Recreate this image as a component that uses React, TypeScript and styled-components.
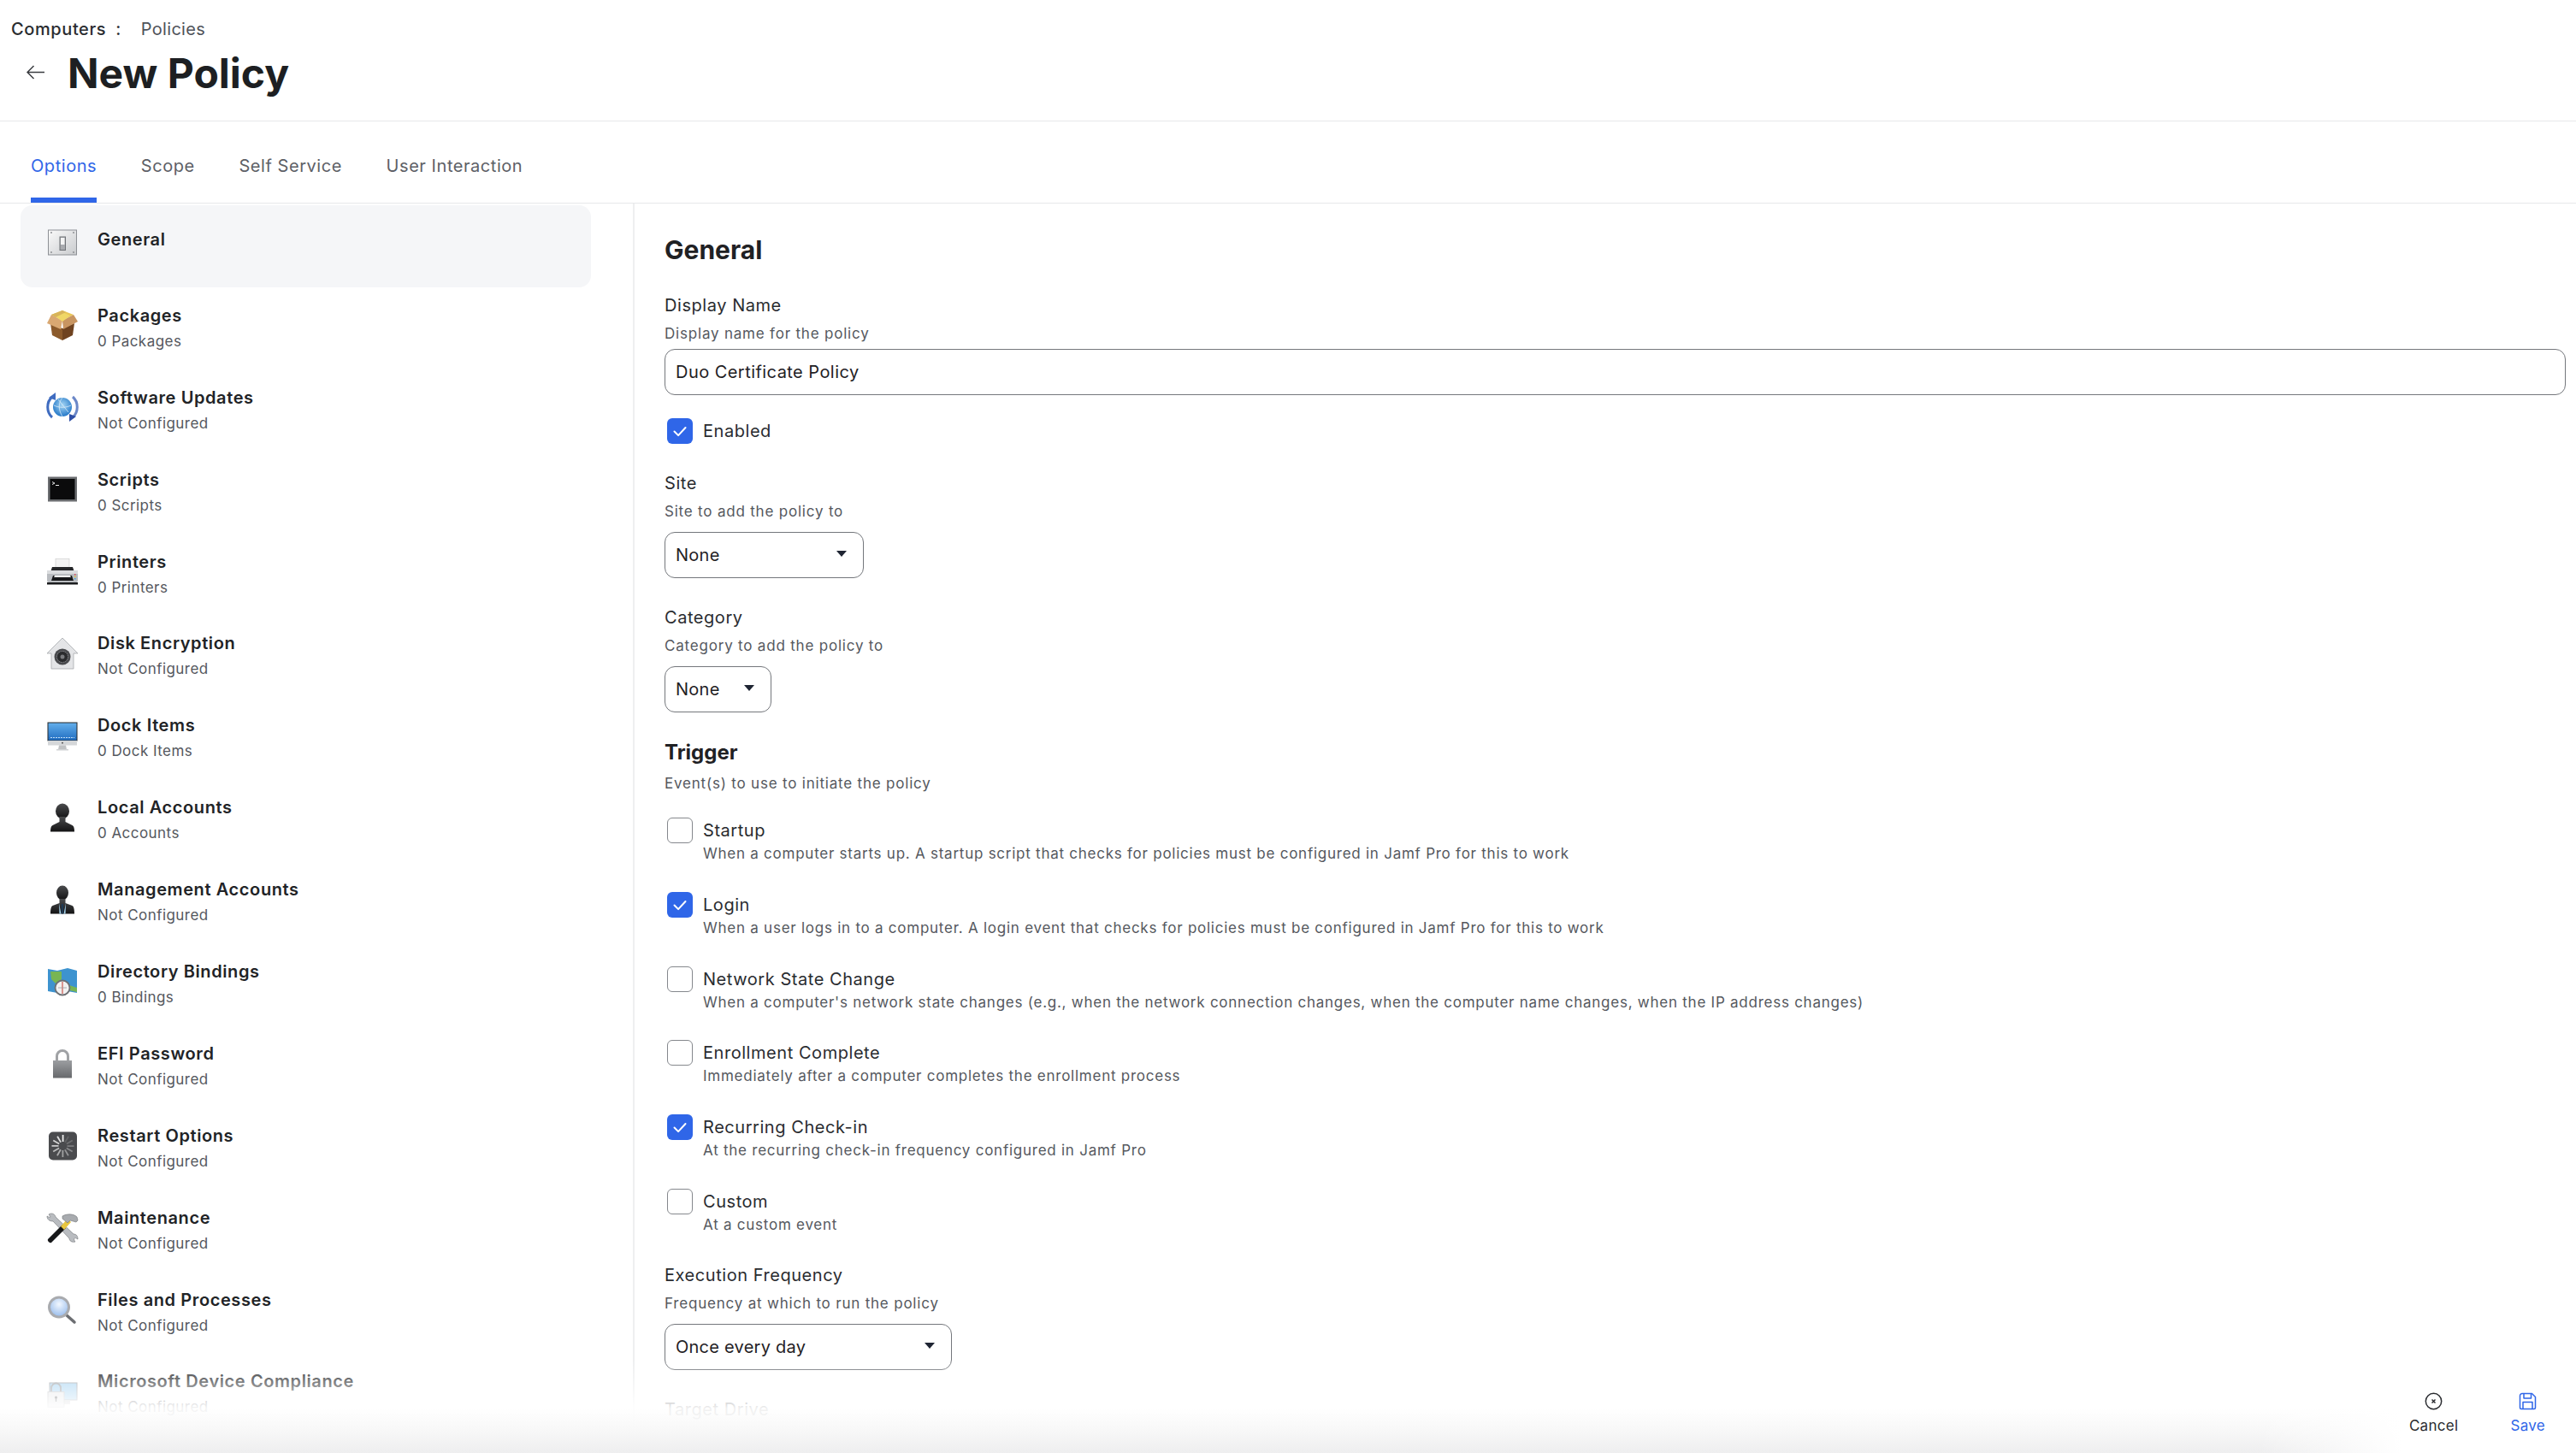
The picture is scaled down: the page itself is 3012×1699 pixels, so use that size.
import React from 'react';
import styled, { createGlobalStyle } from 'styled-components';

const GlobalStyle = createGlobalStyle`
	html, body {
		margin: 0;
		padding: 0;
		height: 1699px;
		overflow: hidden;
		background: #fff;
		font-family: Inter, "Noto Sans", "Liberation Sans", sans-serif;
		color: #1f2124;
	}
	* { box-sizing: border-box; }
`;

const Page = styled.div`
	position: relative;
	display: flex;
	flex-direction: column;
	height: 1699px;
	overflow: hidden;
`;

const Header = styled.header`
	height: 142px;
	flex: none;
	padding: 22px 0 0 13px;
	border-bottom: 1px solid #e7e8ea;
`;

const Breadcrumb = styled.div`
	display: flex;
	gap: 23px;
	font-size: 20px;
	line-height: 24px;
	letter-spacing: 0.3px;
	color: #50535a;
	b {
		display: flex;
		gap: 11px;
		font-weight: 500;
		letter-spacing: 0.6px;
		color: #2a2c30;
	}
`;

const TitleRow = styled.div`
	display: flex;
	align-items: center;
	gap: 27px;
	margin-top: 12px;
	padding-left: 18px;
`;

const BackIcon = styled.svg`
	width: 21px;
	height: 17px;
	flex: none;
	margin-bottom: 3px;
`;

const Title = styled.h1`
	margin: 0;
	font-size: 48px;
	line-height: 56px;
	font-weight: 700;
	color: #1d1f22;
`;

const TabBar = styled.nav`
	display: flex;
	gap: 51.7px;
	flex: none;
	height: 96px;
	padding-left: 36px;
	border-bottom: 1px solid #e7e8ea;
`;

const Tab = styled.div<{ $active?: boolean }>`
	height: 95px;
	padding-top: 40px;
	font-size: 20px;
	line-height: 24px;
	letter-spacing: 0.55px;
	color: ${(p) => (p.$active ? '#2f66e8' : '#5d6066')};
	border-bottom: 6px solid ${(p) => (p.$active ? '#2f66e8' : 'transparent')};
`;

const Body = styled.div`
	display: grid;
	grid-template-columns: 740px 1fr;
	flex: 1;
	min-height: 0;
`;

const Sidebar = styled.aside`
	padding: 2px 49px 0 24px;
	overflow: hidden;
`;

const SideRow = styled.div<{ $active?: boolean }>`
	display: flex;
	align-items: center;
	gap: 22px;
	height: 95.9px;
	padding-left: 30px;
	border-radius: 14px;
	background: ${(p) => (p.$active ? '#f5f6f8' : 'transparent')};
`;

const SideIcon = styled.svg`
	width: 38px;
	height: 38px;
	flex: none;
	margin-bottom: 7px;
	overflow: visible;
`;

const SideTitle = styled.div`
	font-size: 20px;
	line-height: 24px;
	font-weight: 600;
	letter-spacing: 0.6px;
	color: #212326;
	margin-bottom: 6px;
`;

const SideSub = styled.div`
	min-height: 10px;
	font-size: 17px;
	line-height: 24px;
	letter-spacing: 0.45px;
	color: #55585e;
`;

const Panel = styled.main`
	padding: 36px 0 0 35px;
	border-left: 2px solid #eeeff0;
	overflow: hidden;
`;

const PanelTitle = styled.h2`
	margin: 0 0 35px;
	font-size: 30px;
	line-height: 36px;
	font-weight: 700;
	color: #1f2124;
`;

const Field = styled.section<{ $top?: number }>`
	margin-top: ${(p) => p.$top ?? 34}px;
`;

const Label = styled.div`
	font-size: 20px;
	line-height: 24px;
	letter-spacing: 0.55px;
	color: #2a2c30;
`;

const Hint = styled.div`
	margin-top: 11px;
	font-size: 17px;
	line-height: 20px;
	letter-spacing: 0.8px;
	white-space: nowrap;
	color: #55585e;
`;

const TextInput = styled.div`
	display: flex;
	align-items: center;
	width: 2223px;
	height: 54px;
	margin-top: 8px;
	padding-left: 12px;
	border: 1.5px solid #74777c;
	border-radius: 12px;
	font-size: 20px;
	letter-spacing: 0.45px;
	color: #1f2124;
`;

const SelectBox = styled.div<{ $width: number }>`
	display: flex;
	align-items: center;
	justify-content: space-between;
	width: ${(p) => p.$width}px;
	height: 54px;
	margin-top: 14px;
	padding: 0 19px 0 12px;
	border: 1.5px solid #74777c;
	border-radius: 12px;
	font-size: 20px;
	letter-spacing: 0.25px;
	color: #1f2124;
	&::after {
		content: '';
		border-left: 6px solid transparent;
		border-right: 6px solid transparent;
		border-top: 7px solid #1f2533;
		margin-bottom: 3px;
	}
`;

const CheckRow = styled.div`
	display: flex;
	align-items: center;
	gap: 12px;
	margin: 27px 0 0 3px;
	font-size: 20px;
	letter-spacing: 0.55px;
	color: #2a2c30;
`;

const CheckBox = styled.span<{ $checked?: boolean }>`
	display: flex;
	align-items: center;
	justify-content: center;
	width: 30px;
	height: 30px;
	flex: none;
	border-radius: 6px;
	border: ${(p) => (p.$checked ? 'none' : '1.5px solid #85888d')};
	background: ${(p) => (p.$checked ? '#2f66e8' : '#fff')};
`;

const SectionTitle = styled.div`
	font-size: 24px;
	line-height: 30px;
	font-weight: 700;
	color: #1f2124;
`;

const Options = styled.div`
	margin-top: 30px;
`;

const OptionRow = styled.div`
	display: flex;
	gap: 12px;
	height: 86.8px;
	padding-left: 3px;
`;

const OptionLabel = styled.div`
	padding-top: 3px;
	font-size: 20px;
	line-height: 24px;
	letter-spacing: 0.55px;
	color: #2a2c30;
`;

const OptionHint = styled.div`
	margin-top: 5px;
	font-size: 17px;
	line-height: 20px;
	letter-spacing: 0.75px;
	color: #55585e;
`;

const BottomFade = styled.div`
	position: absolute;
	left: 0;
	right: 0;
	bottom: 0;
	height: 109px;
	background: linear-gradient(
		to bottom,
		rgba(255, 255, 255, 0) 0%,
		rgba(255, 255, 255, 0.93) 52%,
		#f8f8f8 75%,
		#eeeeef 100%
	);
`;

const Actions = styled.div`
	position: absolute;
	right: 0;
	bottom: 0;
	display: flex;
	justify-content: flex-end;
	gap: 61px;
	width: 372px;
	height: 109px;
	padding: 38px 36px 0 0;
	background: linear-gradient(to right, rgba(255, 255, 255, 0) 0%, #fff 45%);
`;

const ActionButton = styled.div<{ $primary?: boolean }>`
	display: flex;
	flex-direction: column;
	align-items: center;
	gap: 8px;
	font-size: 17px;
	line-height: 20px;
	letter-spacing: 0.3px;
	color: ${(p) => (p.$primary ? '#2f66e8' : '#2a2c30')};
	svg {
		width: 21px;
		height: 21px;
	}
`;

const Check = () => (
	<svg width="20" height="20" viewBox="0 0 20 20" fill="none">
		<path d="M3.5 10.5l4.6 4.6L16.5 6" stroke="#fff" strokeWidth="2" strokeLinecap="round" strokeLinejoin="round" />
	</svg>
);

// macOS preference style icons, all on a 38 unit grid
const icons: Record<string, React.ReactNode> = {
	general: (
		<>
			<defs>
				<linearGradient id="swBg" x1="0" y1="0" x2="1" y2="1">
					<stop offset="0" stopColor="#fafafa" />
					<stop offset="1" stopColor="#c9cbce" />
				</linearGradient>
			</defs>
			<rect x="2.5" y="4" width="33" height="29" fill="url(#swBg)" stroke="#8d9095" />
			<rect x="16" y="12" width="6.5" height="15.5" fill="#a9abaf" stroke="#6f7277" />
			<rect x="17" y="13" width="4.5" height="8" fill="#f4f4f4" />
			{[[6, 7], [32, 7], [6, 30], [32, 30]].map(([x, y]) => (
				<circle key={`${x}-${y}`} cx={x} cy={y} r="0.9" fill="#85888c" />
			))}
		</>
	),
	packages: (
		<>
			<path d="M5 17l14 6v14L7 31z" fill="#8b5a2b" />
			<path d="M33 17l-14 6v14l12-6z" fill="#6f4320" />
			<path d="M6 7l13-5 13 5-13 7z" fill="#e9c757" />
			<path d="M6 7L1 17l16 7 2-10z" fill="#d9a872" />
			<path d="M32 7l5 8-17 9-1-10z" fill="#c89561" />
			<path d="M10 8l9-4 9 4-9 7z" fill="#f0d766" />
			<path d="M6 7L19 2l4 2-12 6z" fill="#d8b45a" />
		</>
	),
	updates: (
		<>
			<defs>
				<radialGradient id="globe" cx="0.5" cy="0.4" r="0.6">
					<stop offset="0" stopColor="#a5d6f4" />
					<stop offset="1" stopColor="#2478c8" />
				</radialGradient>
			</defs>
			<circle cx="19" cy="19" r="11" fill="url(#globe)" />
			<path d="M9 17c6 3 14 3 20 0M19 8c-5 6-5 14 0 22M14 10l12 15" stroke="#e6f3fb" strokeWidth="0.7" fill="none" />
			<path d="M7 7C0 13 0 25 7 31" stroke="#3f6cc0" strokeWidth="3" fill="none" />
			<path d="M3 8l8-6 0 9z" fill="#3f6cc0" />
			<path d="M31 31c7-6 7-18 0-24" stroke="#3a5fb4" strokeWidth="3" fill="none" opacity="0.75" />
			<path d="M35 30l-8 6 0-9z" fill="#2f4fa6" />
		</>
	),
	scripts: (
		<>
			<rect x="2" y="4.5" width="34" height="29" fill="#6b6d70" />
			<rect x="4.5" y="7" width="29" height="24" fill="#0b0b0c" />
			<path d="M7 10.500l3 1.500-3 1.500" stroke="#e8e8e8" strokeWidth="1" fill="none" />
			<path d="M11 14.500h4" stroke="#e8e8e8" strokeWidth="1" />
		</>
	),
	printers: (
		<>
			<rect x="11" y="4.500" width="16" height="12" fill="#f3f3f3" stroke="#c8c8c8" strokeWidth="0.6" />
			<path d="M7 14h24l2 6H5z" fill="#26272a" />
			<rect x="1" y="18" width="36" height="14" rx="2" fill="#b9bcc0" />
			<rect x="1" y="18" width="36" height="4" fill="#dadcde" />
			<path d="M8 24h22l2 6H6z" fill="#17181a" />
			<path d="M10 24h18l1 2H9z" fill="#f0f0f0" />
			<rect x="1" y="32" width="36" height="2.500" fill="#1b1c1e" />
			<rect x="33" y="22" width="1.500" height="1.500" fill="#e04a5a" />
			<rect x="33" y="24.500" width="1.500" height="1.500" fill="#e5c53a" />
			<rect x="33" y="27" width="1.500" height="1.500" fill="#46a2d8" />
		</>
	),
	disk: (
		<>
			<path d="M19 1L1 19h5v18h26V19h5z" fill="#e4e5e7" stroke="#a7a9ad" strokeWidth="0.8" />
			<circle cx="19" cy="23" r="9.500" fill="#4a4b4e" />
			<circle cx="19" cy="23" r="6.500" fill="#2a2b2d" stroke="#8c8d90" strokeDasharray="1.500 1" />
			<circle cx="19" cy="23" r="2.500" fill="#7a7b7e" />
		</>
	),
	dock: (
		<>
			<defs>
				<linearGradient id="screen" x1="0" y1="0" x2="0" y2="1">
					<stop offset="0" stopColor="#64b0ec" />
					<stop offset="1" stopColor="#1f6cc0" />
				</linearGradient>
			</defs>
			<rect x="2" y="4" width="34" height="21" fill="url(#screen)" stroke="#26282b" />
			<rect x="2" y="25" width="34" height="5.500" fill="#d5d7d9" />
			<circle cx="19" cy="27.700" r="0.9" fill="#444" />
			<path d="M5 21.500h28" stroke="#cfe6f8" strokeWidth="0.9" strokeDasharray="2 1" />
			<path d="M15 30.500h8l1 5h-10z" fill="#c0c2c4" />
			<rect x="12" y="35" width="14" height="1.500" fill="#d0d2d4" />
		</>
	),
	local: (
		<>
			<defs>
				<linearGradient id="person" x1="0" y1="0" x2="0" y2="1">
					<stop offset="0" stopColor="#4a4b4d" />
					<stop offset="1" stopColor="#131314" />
				</linearGradient>
			</defs>
			<ellipse cx="19" cy="11.500" rx="8" ry="9" fill="url(#person)" />
			<path d="M15.500 18h7v6l8 4c2 1 2.500 4 2.500 7.500H5c0-3.500.5-6.500 2.500-7.500l8-4z" fill="url(#person)" />
		</>
	),
	management: (
		<>
			<defs>
				<linearGradient id="admin" x1="0" y1="0" x2="0" y2="1">
					<stop offset="0" stopColor="#4a4b4d" />
					<stop offset="1" stopColor="#131314" />
				</linearGradient>
			</defs>
			<ellipse cx="19" cy="11" rx="7" ry="8.500" fill="url(#admin)" />
			<path d="M15.500 18h7v5l8 3c2 1 2.500 5 2.500 9.500H5c0-4.500.5-8.500 2.500-9.500l8-3z" fill="url(#admin)" />
			<path d="M15 23l2.500 12.500h-2zM23 23l-2.500 12.500h2z" fill="#a6d5ee" />
			<rect x="17.800" y="24" width="2.400" height="11.500" fill="#1f3a55" />
		</>
	),
	directory: (
		<>
			<path d="M2 5l11 2 12-3 11 3v26l-11-2-12 2-11-2z" fill="#3d93cf" />
			<path d="M5 8l13 0 0 9-7 5-5-5z" fill="#78b553" />
			<path d="M27 24l9 3v5l-9-2z" fill="#78b553" />
			<circle cx="19" cy="27" r="8.500" fill="#f1f1f1" stroke="#6d6f73" strokeWidth="1.800" />
			<path d="M19 20v14" stroke="#c9473d" strokeWidth="1.100" />
			<path d="M14 27h10" stroke="#9a9da1" strokeWidth="0.800" />
		</>
	),
	efi: (
		<>
			<defs>
				<linearGradient id="lockBody" x1="0" y1="0" x2="0" y2="1">
					<stop offset="0" stopColor="#9c9ea1" />
					<stop offset="1" stopColor="#67696c" />
				</linearGradient>
			</defs>
			<path d="M12.500 18v-8a6.500 6.500 0 0 1 13 0v8" stroke="#a0a2a5" strokeWidth="3" fill="none" transform="translate(0 1)" />
			<rect x="8" y="16" width="22" height="20.500" fill="url(#lockBody)" />
		</>
	),
	restart: (
		<>
			<rect x="3" y="3.500" width="33" height="33" rx="5" fill="#4a4b4e" />
			{Array.from({ length: 12 }).map((_, i) => (
				<rect
					key={i}
					x="18.700"
					y="7"
					width="1.800"
					height="8"
					fill="#fff"
					opacity={i === 0 ? 0.9 : Math.max(0.12, 0.9 - ((12 - i) % 12) * 0.07)}
					transform={`rotate(${i * 30} 19.500 20)`}
				/>
			))}
		</>
	),
	maintenance: (
		<>
			<path d="M3 4c3-2 7-1 8 3l21 20c3 0 5 2 5 6-2-1-3-2-4-1s0 3 1 4c-4 1-7-1-7-4L8 12c-4 0-7-2-7-6 2 1 3 2 4 1z" fill="#b9bcc0" stroke="#6f7276" strokeWidth="0.6" />
			<path d="M2 33L19 16l4 4L6 37c-2 1-5-2-4-4z" fill="#17181a" />
			<path d="M17 18L25 9l4 4-8 9z" fill="#e8c63e" />
			<path d="M19 6c5-3 13-3 17 1l1 4-2 2-7-2-3 3-6-5z" fill="#a8abaf" stroke="#6f7276" strokeWidth="0.6" />
		</>
	),
	files: (
		<>
			<defs>
				<radialGradient id="lens" cx="0.5" cy="0.35" r="0.7">
					<stop offset="0" stopColor="#f2f8ff" />
					<stop offset="1" stopColor="#8fb6ea" />
				</radialGradient>
			</defs>
			<path d="M24 26l9 8" stroke="#6c6e72" strokeWidth="3.500" strokeLinecap="round" />
			<circle cx="15" cy="16.500" r="11.500" fill="url(#lens)" stroke="#a9abaf" strokeWidth="3" />
		</>
	),
	compliance: (
		<>
			<rect x="4" y="9" width="32" height="20" fill="#a8d4f2" stroke="#9a9da1" />
			<rect x="18" y="29" width="10" height="5" fill="#cfd1d4" />
			<path d="M6 20v-5a5.500 5.500 0 0 1 11 0v5" stroke="#9a9da1" strokeWidth="2" fill="none" />
			<rect x="2" y="19.500" width="19" height="18" fill="#e6e7e9" stroke="#bdbfc2" />
			<circle cx="11.500" cy="26" r="1.600" fill="#55585c" />
			<rect x="10.800" y="26" width="1.400" height="5" fill="#55585c" />
		</>
	),
};

const sideItems = [
	{ icon: 'general', title: 'General', sub: '' },
	{ icon: 'packages', title: 'Packages', sub: '0 Packages' },
	{ icon: 'updates', title: 'Software Updates', sub: 'Not Configured' },
	{ icon: 'scripts', title: 'Scripts', sub: '0 Scripts' },
	{ icon: 'printers', title: 'Printers', sub: '0 Printers' },
	{ icon: 'disk', title: 'Disk Encryption', sub: 'Not Configured' },
	{ icon: 'dock', title: 'Dock Items', sub: '0 Dock Items' },
	{ icon: 'local', title: 'Local Accounts', sub: '0 Accounts' },
	{ icon: 'management', title: 'Management Accounts', sub: 'Not Configured' },
	{ icon: 'directory', title: 'Directory Bindings', sub: '0 Bindings' },
	{ icon: 'efi', title: 'EFI Password', sub: 'Not Configured' },
	{ icon: 'restart', title: 'Restart Options', sub: 'Not Configured' },
	{ icon: 'maintenance', title: 'Maintenance', sub: 'Not Configured' },
	{ icon: 'files', title: 'Files and Processes', sub: 'Not Configured' },
	{ icon: 'compliance', title: 'Microsoft Device Compliance', sub: 'Not Configured' },
];

const triggers = [
	{
		label: 'Startup',
		hint: 'When a computer starts up. A startup script that checks for policies must be configured in Jamf Pro for this to work',
	},
	{
		label: 'Login',
		hint: 'When a user logs in to a computer. A login event that checks for policies must be configured in Jamf Pro for this to work',
		checked: true,
	},
	{
		label: 'Network State Change',
		hint: "When a computer's network state changes (e.g., when the network connection changes, when the computer name changes, when the IP address changes)",
	},
	{ label: 'Enrollment Complete', hint: 'Immediately after a computer completes the enrollment process' },
	{ label: 'Recurring Check-in', hint: 'At the recurring check-in frequency configured in Jamf Pro', checked: true },
	{ label: 'Custom', hint: 'At a custom event' },
];

const App = () => {
	return (
		<Page>
			<GlobalStyle />
			<Header>
				<Breadcrumb>
					<b>
						Computers<span>:</span>
					</b>
					<span>Policies</span>
				</Breadcrumb>
				<TitleRow>
					<BackIcon viewBox="0 0 21 17" fill="none">
						<path d="M8.500 1L1 8.500 8.500 16M1 8.500h20" stroke="#3a3c40" strokeWidth="1.500" />
					</BackIcon>
					<Title>New Policy</Title>
				</TitleRow>
			</Header>
			<TabBar>
				<Tab $active>Options</Tab>
				<Tab>Scope</Tab>
				<Tab>Self Service</Tab>
				<Tab>User Interaction</Tab>
			</TabBar>
			<Body>
				<Sidebar>
					{sideItems.map((item, i) => (
						<SideRow key={item.title} $active={i === 0}>
							<SideIcon viewBox="0 0 38 38">{icons[item.icon]}</SideIcon>
							<div>
								<SideTitle>{item.title}</SideTitle>
								<SideSub>{item.sub}</SideSub>
							</div>
						</SideRow>
					))}
				</Sidebar>
				<Panel>
					<PanelTitle>General</PanelTitle>
					<Label>Display Name</Label>
					<Hint>Display name for the policy</Hint>
					<TextInput>Duo Certificate Policy</TextInput>
					<CheckRow>
						<CheckBox $checked>
							<Check />
						</CheckBox>
						Enabled
					</CheckRow>
					<Field $top={34}>
						<Label>Site</Label>
						<Hint>Site to add the policy to</Hint>
						<SelectBox $width={233}>None</SelectBox>
					</Field>
					<Field>
						<Label>Category</Label>
						<Hint>Category to add the policy to</Hint>
						<SelectBox $width={125}>None</SelectBox>
					</Field>
					<Field $top={32}>
						<SectionTitle>Trigger</SectionTitle>
						<Hint>Event(s) to use to initiate the policy</Hint>
					</Field>
					<Options>
						{triggers.map((t) => (
							<OptionRow key={t.label}>
								<CheckBox $checked={t.checked}>{t.checked && <Check />}</CheckBox>
								<div>
									<OptionLabel>{t.label}</OptionLabel>
									<OptionHint>{t.hint}</OptionHint>
								</div>
							</OptionRow>
						))}
					</Options>
					<Field $top={2}>
						<Label>Execution Frequency</Label>
						<Hint>Frequency at which to run the policy</Hint>
						<SelectBox $width={336}>Once every day</SelectBox>
					</Field>
					<Field>
						<Label>Target Drive</Label>
						<Hint>The drive on which to run the policy (e.g. "/Volumes/Restore/"). The policy runs on the boot drive by default</Hint>
					</Field>
				</Panel>
			</Body>
			<BottomFade />
			<Actions>
				<ActionButton>
					<svg viewBox="0 0 21 21" fill="none">
						<circle cx="10.500" cy="10.500" r="9.200" stroke="#2a2c30" strokeWidth="1.500" />
						<path d="M8.500 8.500l4 4M12.500 8.500l-4 4" stroke="#2a2c30" strokeWidth="1.500" />
					</svg>
					Cancel
				</ActionButton>
				<ActionButton $primary>
					<svg viewBox="0 0 21 21" fill="none" stroke="#2f66e8" strokeWidth="1.500" strokeLinejoin="round">
						<path d="M4 1.500h11.500l4 4V18a1.500 1.500 0 0 1-1.500 1.500H3A1.500 1.500 0 0 1 1.500 18V4A2.500 2.500 0 0 1 4 1.500z" />
						<path d="M6 1.500V7h8.500V1.500M5 19.500V11.500h11v8" />
					</svg>
					Save
				</ActionButton>
			</Actions>
		</Page>
	);
};

export default App;
